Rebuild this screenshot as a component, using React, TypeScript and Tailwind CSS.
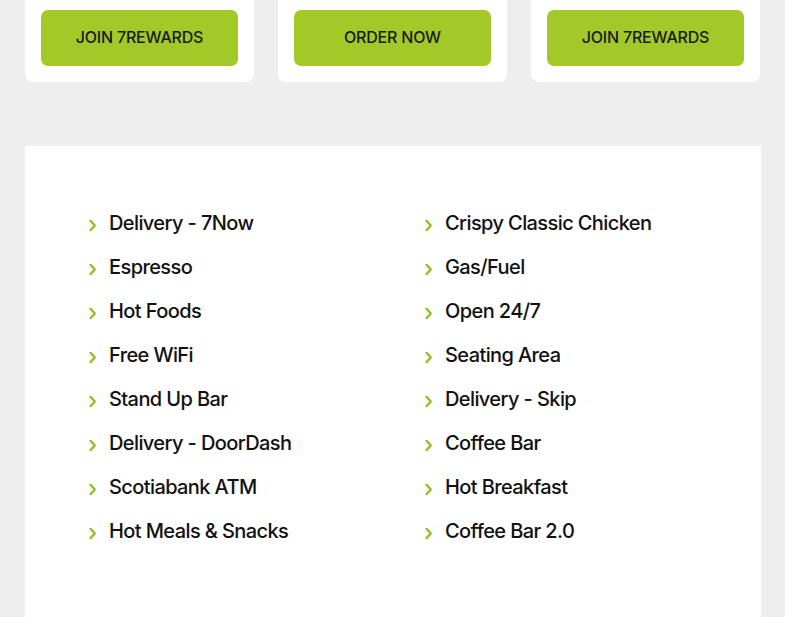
const cards = ['JOIN 7REWARDS', 'ORDER NOW', 'JOIN 7REWARDS'];

const left = [
  'Delivery - 7Now',
  'Espresso',
  'Hot Foods',
  'Free WiFi',
  'Stand Up Bar',
  'Delivery - DoorDash',
  'Scotiabank ATM',
  'Hot Meals & Snacks',
];

const right = [
  'Crispy Classic Chicken',
  'Gas/Fuel',
  'Open 24/7',
  'Seating Area',
  'Delivery - Skip',
  'Coffee Bar',
  'Hot Breakfast',
  'Coffee Bar 2.0',
];

function Chevron() {
  return (
    <svg width="9" height="13" viewBox="0 0 9 13" className="shrink-0 mt-[4px]">
      <path d="M2.5 1.8 L6.8 6.5 L2.5 11.2" fill="none" stroke="#8dbb1e" strokeWidth="2.2" strokeLinecap="round" strokeLinejoin="round" />
    </svg>
  );
}

function Amenity({ label }: { label: string }) {
  return (
    <li className="flex items-center gap-[12px] h-[28px]">
      <Chevron />
      <span className="text-[20px] font-medium text-[#111] tracking-[-0.6px]">{label}</span>
    </li>
  );
}

export default function App() {
  return (
    <div className="w-[785px] h-[617px] overflow-hidden bg-[#eeeeee]" style={{ fontFamily: 'Inter, "Liberation Sans", sans-serif' }}>
      <div className="flex gap-[24px] px-[25px]">
        {cards.map((c, i) => (
          <div key={i} className="w-[229px] bg-white rounded-b-[8px] px-[16px] pt-[10px] pb-[16px]">
            <button className="w-full h-[56px] pb-[2px] rounded-[7px] bg-[#a2c928] text-[16px] font-medium text-[#1a1a1a] tracking-[-0.2px]">
              {c}
            </button>
          </div>
        ))}
      </div>

      <div className="mt-[64px] ml-[25px] w-[736px] h-[500px] bg-white pt-[63px] pl-[63px]">
        <div className="grid grid-cols-[336px_336px]">
          <ul className="flex flex-col gap-[16px]">
            {left.map(l => <Amenity key={l} label={l} />)}
          </ul>
          <ul className="flex flex-col gap-[16px]">
            {right.map(l => <Amenity key={l} label={l} />)}
          </ul>
        </div>
      </div>
    </div>
  );
}
